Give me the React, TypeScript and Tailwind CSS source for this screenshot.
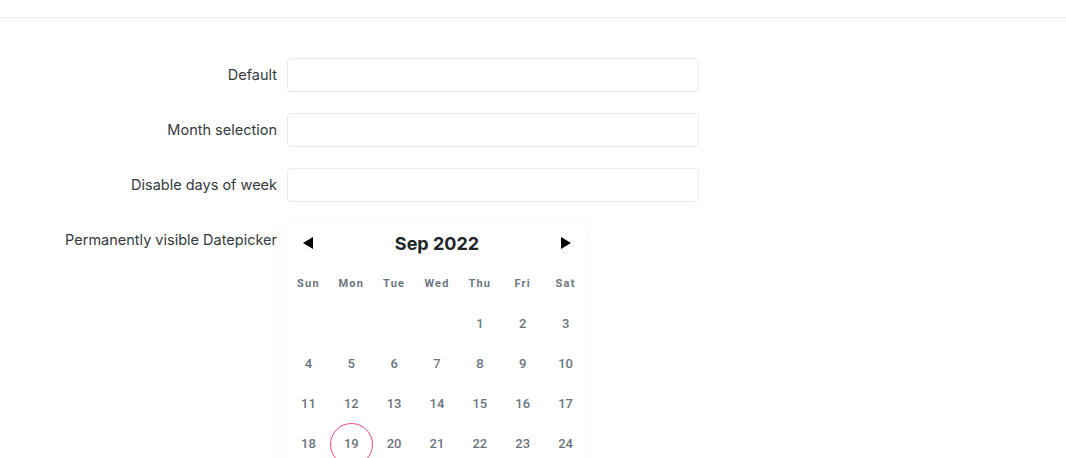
const days = ['Sun', 'Mon', 'Tue', 'Wed', 'Thu', 'Fri', 'Sat'];

// Sep 2022 starts on a Thursday
const cells: (number | null)[] = [
  null, null, null, null, 1, 2, 3,
  4, 5, 6, 7, 8, 9, 10,
  11, 12, 13, 14, 15, 16, 17,
  18, 19, 20, 21, 22, 23, 24,
  25, 26, 27, 28, 29, 30, null,
];

function Arrow({ dir }: { dir: 'left' | 'right' }) {
  return (
    <svg width="10" height="12" viewBox="0 0 10 12" className="block">
      {dir === 'left' ? (
        <polygon points="10,0 10,12 0,6" fill="#000" />
      ) : (
        <polygon points="0,0 0,12 10,6" fill="#000" />
      )}
    </svg>
  );
}

function Field({ label }: { label: string }) {
  return (
    <div className="flex items-start mb-[21px]">
      <label className="w-[277px] text-right text-[14.5px] leading-[34px] text-[#343a40] font-['Inter',sans-serif]">
        {label}
      </label>
      <input
        type="text"
        className="ml-[10px] w-[412px] h-[34px] rounded-[4px] border border-[#e9ecef] bg-white outline-none"
      />
    </div>
  );
}

function Datepicker() {
  return (
    <div className="ml-[10px] w-[300px] rounded-[8px] bg-white shadow-[0_0_10px_rgba(240,70,130,0.07)]">
      {/* Header */}
      <div className="flex items-center justify-between h-[40px] px-[16px]">
        <Arrow dir="left" />
        <span className="text-[18px] font-bold text-[#212529] font-['Inter',sans-serif]">
          Sep 2022
        </span>
        <Arrow dir="right" />
      </div>

      {/* Weekdays */}
      <div className="grid grid-cols-7 h-[40px] mt-[1px] items-center">
        {days.map((d) => (
          <div
            key={d}
            className="text-center text-[11px] font-bold tracking-[1.2px] text-[#6c757d]"
          >
            {d}
          </div>
        ))}
      </div>

      {/* Days */}
      <div className="grid grid-cols-7">
        {cells.map((n, i) => (
          <div key={i} className="h-[40px] flex items-center justify-center">
            {n !== null && (
              <span
                className={
                  n === 19
                    ? 'w-[43px] h-[43px] rounded-full border border-[#f0457c] flex items-center justify-center text-[13px] font-medium text-[#6c757d]'
                    : 'text-[13px] font-medium text-[#6c757d]'
                }
              >
                {n}
              </span>
            )}
          </div>
        ))}
      </div>
    </div>
  );
}

export default function App() {
  return (
    <div className="min-h-screen bg-white font-['Roboto',sans-serif]">
      <header className="h-[18px] border-b border-[#eef0f3]" />

      <main className="pt-[40px]">
        <Field label="Default" />
        <Field label="Month selection" />
        <Field label="Disable days of week" />

        <div className="flex items-start">
          <label className="w-[277px] text-right text-[14.5px] leading-[34px] text-[#343a40] font-['Inter',sans-serif]">
            Permanently visible Datepicker
          </label>
          <Datepicker />
        </div>
      </main>
    </div>
  );
}
